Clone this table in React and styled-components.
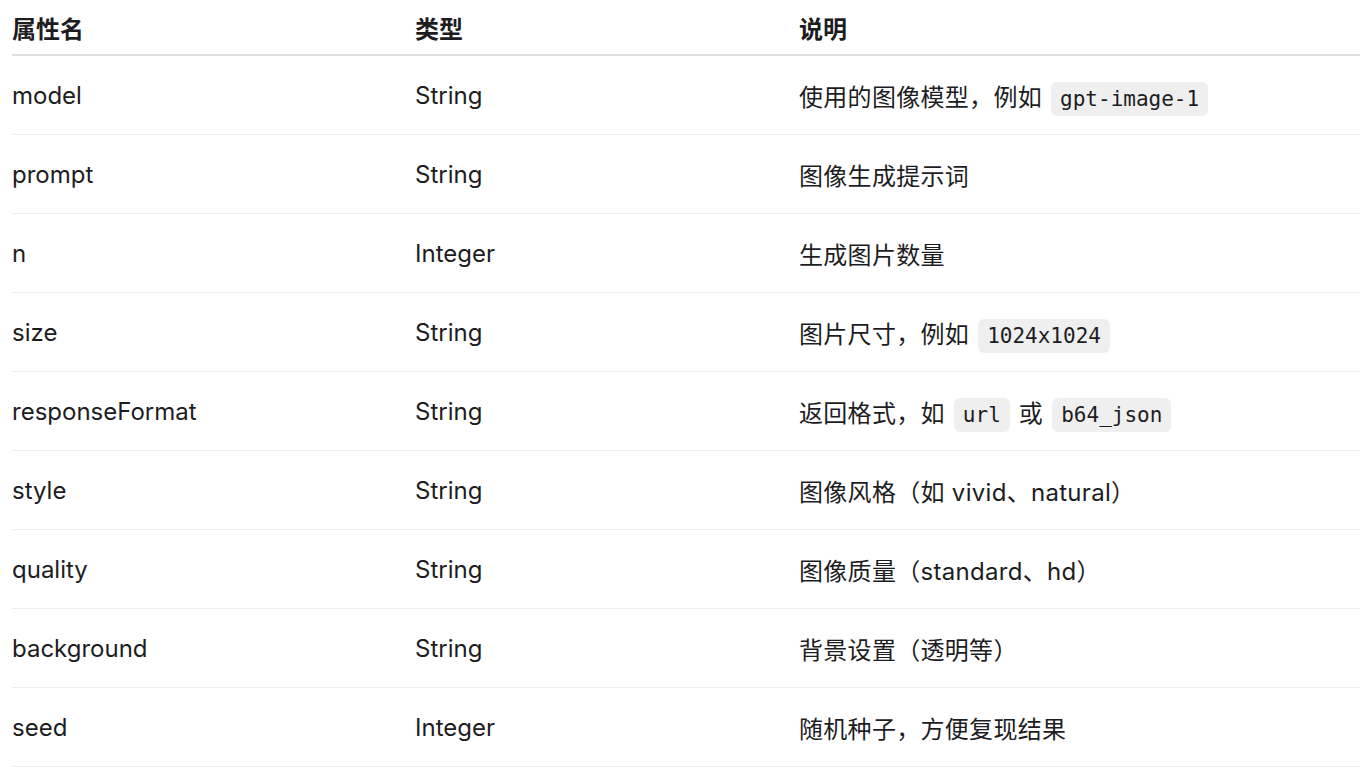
import React from 'react'
import styled, { createGlobalStyle } from 'styled-components'

const GlobalStyle = createGlobalStyle`
  body {
    margin: 0;
    background: #ffffff;
    font-family: "Inter", "Noto Sans CJK SC", sans-serif;
    color: #1d1d1f;
  }
`

const Wrapper = styled.div`
  padding: 0 6px 0 12px;
`

const Table = styled.table`
  width: 100%;
  border-collapse: collapse;
  font-size: 24px;
  table-layout: fixed;
`

const HeadCell = styled.th`
  text-align: left;
  font-weight: 700;
  height: 54px;
  padding: 0;
  vertical-align: middle;
  border-bottom: 2px solid #dedede;
  width: ${props => props.w || 'auto'};
`

const Row = styled.tr`
  border-bottom: 1px solid #ececec;
`

const Cell = styled.td`
  height: 78px;
  padding: 0;
  vertical-align: middle;
  white-space: nowrap;
`

const Desc = styled.span`
  letter-spacing: 0.3px;
`

const Code = styled.code`
  font-family: "DejaVu Sans Mono", monospace;
  font-size: 21px;
  letter-spacing: 0;
  background: #efefef;
  border-radius: 6px;
  padding: 5px 9px;
  margin: 0 2px;
`

const rows = [
  ['model', 'String', <>使用的图像模型，例如 <Code>gpt-image-1</Code></>],
  ['prompt', 'String', '图像生成提示词'],
  ['n', 'Integer', '生成图片数量'],
  ['size', 'String', <>图片尺寸，例如 <Code>1024x1024</Code></>],
  ['responseFormat', 'String', <>返回格式，如 <Code>url</Code> 或 <Code>b64_json</Code></>],
  ['style', 'String', '图像风格（如 vivid、natural）'],
  ['quality', 'String', '图像质量（standard、hd）'],
  ['background', 'String', '背景设置（透明等）'],
  ['seed', 'Integer', '随机种子，方便复现结果'],
]

export default function App() {
  return (
    <Wrapper>
      <GlobalStyle />
      <Table>
        <thead>
          <tr>
            <HeadCell w="403px">属性名</HeadCell>
            <HeadCell w="384px">类型</HeadCell>
            <HeadCell>说明</HeadCell>
          </tr>
        </thead>
        <tbody>
          {rows.map(([name, type, desc]) => (
            <Row key={name}>
              <Cell>{name}</Cell>
              <Cell>{type}</Cell>
              <Cell><Desc>{desc}</Desc></Cell>
            </Row>
          ))}
        </tbody>
      </Table>
    </Wrapper>
  )
}
